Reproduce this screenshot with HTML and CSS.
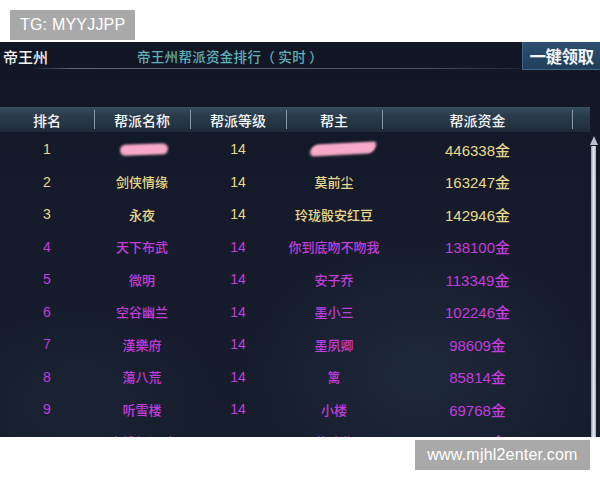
FILE: index.html
```html
<!DOCTYPE html>
<html lang="zh">
<head>
<meta charset="utf-8">
<link rel="stylesheet" href="styles.css">
</head>
<body>
<div class="page">
  <div class="tag">TG: MYYJJPP</div>
  <div class="panel">
    <div class="topbar">
      <div class="realm">帝王州</div>
      <div class="title">帝王州帮派资金排行（ 实时 ）</div>
      <div class="btn">一键领取</div>
    </div>
    <div class="topline"></div>
    <div class="thead">
      <div class="th">排名</div>
      <div class="th sep">帮派名称</div>
      <div class="th sep">帮派等级</div>
      <div class="th sep">帮主</div>
      <div class="th sep sepr">帮派资金</div>
    </div>
    <div class="body">
      <div class="rows">
        <div class="row gold"><span>1</span><span><i class="blob b1"></i></span><span>14</span><span><i class="blob b2"></i></span><span class="money">446338金</span></div>
        <div class="row gold"><span>2</span><span>剑侠情缘</span><span>14</span><span>莫前尘</span><span class="money">163247金</span></div>
        <div class="row gold"><span>3</span><span>永夜</span><span>14</span><span>玲珑骰安红豆</span><span class="money">142946金</span></div>
        <div class="row pink"><span>4</span><span>天下布武</span><span>14</span><span>你到底吻不吻我</span><span class="money">138100金</span></div>
        <div class="row pink"><span>5</span><span>微明</span><span>14</span><span>安子乔</span><span class="money">113349金</span></div>
        <div class="row pink"><span>6</span><span>空谷幽兰</span><span>14</span><span>墨小三</span><span class="money">102246金</span></div>
        <div class="row pink"><span>7</span><span>漢樂府</span><span>14</span><span>墨夙卿</span><span class="money">98609金</span></div>
        <div class="row pink"><span>8</span><span>蕩八荒</span><span>14</span><span>篱</span><span class="money">85814金</span></div>
        <div class="row pink"><span>9</span><span>听雪楼</span><span>14</span><span>小楼</span><span class="money">69768金</span></div>
        <div class="row pink"><span>10</span><span>小桃红酒肆</span><span>13</span><span>暮歌北</span><span class="money">66362金</span></div>
      </div>
      <div class="scroll">
        <div class="arrow"></div>
        <div class="track"></div>
      </div>
    </div>
  </div>
  <div class="footer">
    <div class="site">www.mjhl2enter.com</div>
  </div>
</div>
</body>
</html>
```

FILE: styles.css
```css
* { box-sizing: border-box; }
html, body { margin: 0; padding: 0; background: #ffffff; }
body { width: 600px; height: 480px; overflow: hidden; font-family: "Liberation Sans", "Noto Sans CJK SC", sans-serif; }
.page { display: flex; flex-direction: column; padding-top: 10px; }
.page > * { flex-shrink: 0; }
.tag {
  margin-left: 10px; width: 125px; height: 30px; background: #a9a9a9; color: #ffffff;
  font-size: 16px; line-height: 30px; padding-left: 10px; letter-spacing: 0.2px;
}
.panel {
  margin-top: 2px; height: 395px; overflow: hidden; position: relative;
  background:
    radial-gradient(ellipse 260px 200px at 420px 330px, rgba(40,56,78,0.45), rgba(20,26,40,0) 70%),
    radial-gradient(ellipse 200px 150px at 80px 360px, rgba(36,50,70,0.35), rgba(20,26,40,0) 70%),
    linear-gradient(#121624, #151b2b 40%, #161d2c);
  display: flex; flex-direction: column;
}
.panel > * { flex-shrink: 0; }
.topbar { height: 28px; display: flex; align-items: center; }
.realm { color: #f2f4f6; font-size: 15px; font-weight: 500; font-family: "Noto Sans CJK SC", sans-serif; padding-left: 3px; width: 137px; }
.title { color: #5fb1b8; font-size: 13.5px; font-weight: 500; font-family: "Noto Sans CJK SC", sans-serif; flex: 1; letter-spacing: 0.3px; }
.btn {
  width: 78px; height: 28px; background: linear-gradient(#2d4f70, #223e5c);
  border-left: 1px solid #3e6486; border-bottom: 1px solid #3e6486;
  color: #f4f6fa; font-size: 16.5px; font-weight: bold; font-family: "Noto Sans CJK SC", sans-serif;
  display: flex; align-items: center; justify-content: center; letter-spacing: -0.5px;
}
.topline {
  height: 1px; margin-top: -2px; margin-right: 80px;
  background: linear-gradient(90deg, rgba(90,100,115,0) 0, rgba(90,100,115,0) 30px, rgba(110,120,135,0.8) 70px, rgba(100,110,125,0.7) 420px, rgba(60,70,85,0.3) 520px);
}
.thead {
  margin-top: 38px; height: 25px; width: 590px; display: grid;
  grid-template-columns: 94px 96px 96px 96px 191px 17px;
  background: linear-gradient(#3a4f5f, #2a3b4b 35%, #243443 70%, #1d2a38);
  color: #f4f6f8; font-size: 14px; font-family: "Noto Sans CJK SC", sans-serif; font-weight: 500;
}
.th { display: flex; align-items: center; justify-content: center; position: relative; }
.sep::before {
  content: ""; position: absolute; left: 0; top: 3px; bottom: 3px; width: 1px; background: #8a98a6;
}
.sepr::after {
  content: ""; position: absolute; right: 0; top: 3px; bottom: 3px; width: 1px; background: #8a98a6;
}
.body { display: flex; margin-top: 1px; }
.rows { width: 590px; display: flex; flex-direction: column; }
.row {
  height: 32.5px; flex-shrink: 0; display: grid; grid-template-columns: 94px 96px 96px 96px 191px;
  align-items: center; font-size: 13px; font-weight: 500; font-family: "Liberation Sans", "Noto Sans CJK SC", sans-serif;
}
.row span { text-align: center; display: flex; justify-content: center; align-items: center; }
.row span:nth-child(1), .row span:nth-child(3) { font-size: 14px; }
.money { font-size: 15px; }
.gold { color: #e8d98a; }
.pink { color: #c43cdc; }
.blob { display: block; background: #f6a9c8; filter: blur(1px); border-radius: 6px; }
.b1 { width: 48px; height: 11px; margin-left: 4px; transform: rotate(-2deg); }
.b2 { width: 64px; height: 12px; margin-left: 18px; border-radius: 8px 6px 8px 8px; transform: skewX(-20deg) rotate(-3deg); }
.scroll { width: 7px; display: flex; flex-direction: column; align-items: center; margin-top: 3px; }
.arrow {
  width: 0; height: 0; border-left: 4px solid transparent; border-right: 4px solid transparent;
  border-bottom: 9px solid #b9c0cc;
}
.track {
  width: 5px; height: 320px; margin-top: 1px;
  background: linear-gradient(90deg, #8e96a6, #e6e9f0 50%, #a4acba);
}
.footer { display: flex; justify-content: flex-end; padding-right: 10px; margin-top: 3px; }
.site {
  width: 175px; height: 30px; background: #a9a9a9; color: #ffffff; font-size: 16px;
  line-height: 30px; text-align: center; letter-spacing: 0.2px;
}
```
